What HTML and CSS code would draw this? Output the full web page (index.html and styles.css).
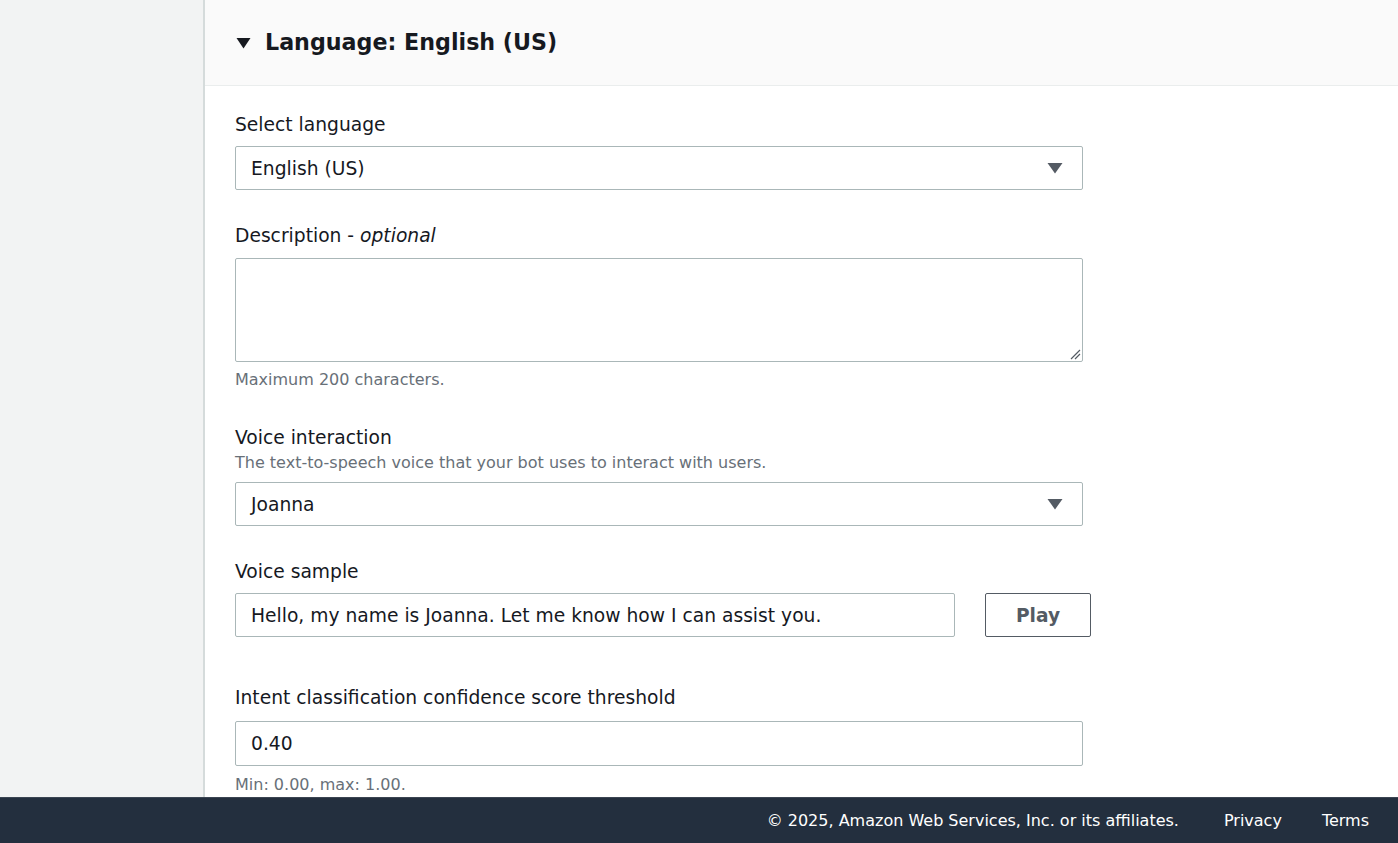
FILE: index.html
```html
<!DOCTYPE html>
<html lang="en">
<head>
<meta charset="utf-8">
<title>Language: English (US)</title>
<link rel="stylesheet" href="styles.css">
</head>
<body>
<div class="app">
  <aside class="sidebar"></aside>
  <main class="main">
    <header class="section-header">
      <svg class="caret" width="15" height="12" viewBox="0 0 15 12"><polygon points="0.5,1 14.5,1 7.5,11.5" fill="#16191f"/></svg>
      <h2 class="title">Language: English (US)</h2>
    </header>
    <div class="form">
      <label class="label l-first">Select language</label>
      <div class="select field g-11">
        <span>English (US)</span>
        <svg class="sel-caret" width="16" height="12" viewBox="0 0 16 12"><polygon points="0.5,1 15.5,1 8,11.5" fill="#545b64"/></svg>
      </div>

      <label class="label g-34">Description - <em>optional</em></label>
      <div class="textarea field g-12">
        <svg class="grip" width="12" height="12" viewBox="0 0 12 12"><path d="M11 2 L2 11 M11 6 L6 11" stroke="#545b64" stroke-width="1.2"/></svg>
      </div>
      <div class="hint g-8">Maximum 200 characters.</div>

      <label class="label g-36">Voice interaction</label>
      <div class="desc g-5">The text-to-speech voice that your bot uses to interact with users.</div>
      <div class="select field g-9">
        <span>Joanna</span>
        <svg class="sel-caret" width="16" height="12" viewBox="0 0 16 12"><polygon points="0.5,1 15.5,1 8,11.5" fill="#545b64"/></svg>
      </div>

      <label class="label g-34">Voice sample</label>
      <div class="row g-11">
        <div class="input sample">Hello, my name is Joanna. Let me know how I can assist you.</div>
        <button class="btn">Play</button>
      </div>

      <label class="label g-49">Intent classification confidence score threshold</label>
      <div class="input field tall g-13">0.40</div>
      <div class="hint g-9">Min: 0.00, max: 1.00.</div>
    </div>
  </main>
</div>
<footer class="footer">
  <span class="copy">© 2025, Amazon Web Services, Inc. or its affiliates.</span>
  <a class="flink">Privacy</a>
  <a class="flink last">Terms</a>
</footer>
</body>
</html>
```
FILE: styles.css
```css
* { box-sizing: border-box; }
html, body { margin: 0; padding: 0; height: 100%; }
body {
  font-family: "DejaVu Sans", "Open Sans", sans-serif;
  color: #16191f;
  overflow: hidden;
  display: flex;
  flex-direction: column;
}
.app {
  display: flex;
  height: 797px;
  flex: none;
  overflow: hidden;
}
.sidebar {
  width: 205px;
  flex: none;
  background: #f2f3f3;
  border-right: 2px solid #d5dbdb;
}
.main {
  flex: 1;
  background: #fff;
}
.section-header {
  height: 86px;
  background: #fafafa;
  border-bottom: 1px solid #eaeded;
  display: flex;
  align-items: center;
  padding-left: 31px;
}
.caret { margin-right: 14px; margin-top: 1px; }
.title {
  margin: 0;
  font-size: 22.2px;
  font-weight: 700;
  line-height: 30px;
  padding-bottom: 1px;
}
.form {
  display: flex;
  flex-direction: column;
  align-items: flex-start;
  padding-left: 30px;
}
.label {
  font-size: 18.7px;
  line-height: 22px;
  height: 22px;
  padding-top: 1px;
  white-space: nowrap;
}
.label em { font-style: italic; }
.l-first { margin-top: 27px; }
.g-5 { margin-top: 5px; }
.g-8 { margin-top: 8px; }
.g-9 { margin-top: 9px; }
.g-11 { margin-top: 11px; }
.g-12 { margin-top: 12px; }
.g-13 { margin-top: 13px; }
.g-34 { margin-top: 34px; }
.g-36 { margin-top: 36px; }
.g-49 { margin-top: 49px; }
.field { width: 848px; }
.select, .input {
  height: 44px;
  border: 1px solid #aab7b8;
  border-radius: 2px;
  display: flex;
  align-items: center;
  padding: 0 19px 0 15px;
  font-size: 18.7px;
  justify-content: space-between;
  white-space: nowrap;
}
.tall { height: 45px; }
.textarea {
  height: 104px;
  border: 1px solid #aab7b8;
  border-radius: 2px;
  position: relative;
}
.grip { position: absolute; right: 1px; bottom: 1px; }
.hint, .desc {
  font-size: 16px;
  line-height: 20px;
  color: #687078;
  white-space: nowrap;
}
.row {
  display: flex;
  align-items: center;
  gap: 30px;
}
.sample { width: 720px; flex: none; }
.btn {
  width: 106px;
  height: 44px;
  flex: none;
  border: 1px solid #545b64;
  border-radius: 2px;
  background: #fff;
  color: #545b64;
  font-family: inherit;
  font-size: 18.6px;
  font-weight: 700;
  padding: 0;
}
.footer {
  height: 46px;
  flex: none;
  background: #232f3e;
  border-top: 1px solid #3b4552;
  display: flex;
  align-items: center;
  justify-content: flex-end;
  padding-right: 29px;
  color: #fff;
  font-size: 16px;
}
.copy { margin-right: 45px; white-space: nowrap; }
.flink { margin-right: 40px; color: #fff; white-space: nowrap; }
.flink.last { margin-right: 0; }
```
